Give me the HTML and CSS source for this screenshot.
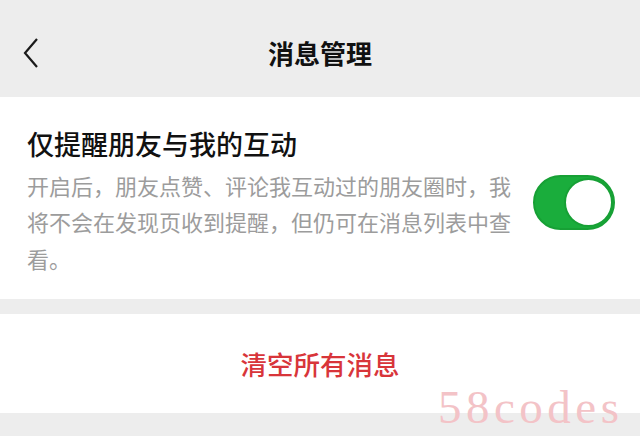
FILE: index.html
```html
<!DOCTYPE html>
<html>
<head>
    <title>消息管理</title>
    <link rel="stylesheet" href="styles.css">
</head>
<body>
    <div class="header">
        <div class="back">
            <svg width="18" height="32" viewBox="0 0 18 32">
                <path d="M15 2 L3 16 L15 30" fill="none" stroke="#1a1a1a" stroke-width="2.2"/>
            </svg>
        </div>
        <div class="title">消息管理</div>
    </div>

    <div class="card setting">
        <div class="text">
            <div class="label">仅提醒朋友与我的互动</div>
            <div class="desc">开启后，朋友点赞、评论我互动过的朋友圈时，我将不会在发现页收到提醒，但仍可在消息列表中查看。</div>
        </div>
        <div class="switch"><div class="knob"></div></div>
    </div>

    <div class="card clear">
        <div class="clear-btn">清空所有消息</div>
        <div class="watermark">58codes</div>
    </div>
</body>
</html>
```

FILE: styles.css
```css
body {
    margin: 0;
    background-color: #ededed;
    font-family: "Noto Sans CJK SC", "Noto Sans", sans-serif;
    width: 640px;
    height: 436px;
    overflow: hidden;
}
.header {
    height: 97px;
    display: flex;
    align-items: center;
    justify-content: center;
    position: relative;
}
.back {
    position: absolute;
    left: 22px;
    top: 37px;
    width: 18px;
    height: 32px;
}
.title {
    font-size: 26px;
    font-weight: 700;
    color: #111;
    margin-top: 8px;
}
.card {
    background-color: #fff;
}
.setting {
    display: flex;
    align-items: center;
    padding: 22px 25px 18px 27px;
    height: 162px;
}
.text {
    width: 494px;
}
.label {
    font-size: 27px;
    font-weight: 500;
    color: #111;
    line-height: 40px;
}
.desc {
    font-size: 22px;
    color: #9c9c9c;
    line-height: 36.5px;
    margin-top: 3px;
}
.switch {
    margin-left: 12px;
    margin-top: 4px;
    width: 82px;
    height: 55px;
    border-radius: 28px;
    background-color: #1aad3c;
    box-sizing: border-box;
    border: 2px solid #17a035;
    display: flex;
    justify-content: flex-end;
    align-items: center;
}
.knob {
    width: 49px;
    height: 49px;
    border-radius: 50%;
    background-color: #fff;
    border: 2px solid #17a035;
    box-sizing: border-box;
    margin-right: 0;
}
.clear {
    margin-top: 15px;
    height: 99px;
    display: flex;
    justify-content: center;
    align-items: center;
    position: relative;
}
.clear-btn {
    font-size: 26.5px;
    font-weight: 500;
    color: #d8353a;
}
.watermark {
    position: absolute;
    left: 438px;
    top: 66px;
    font-family: "Liberation Serif", serif;
    font-size: 47px;
    color: #f3c3c7;
    letter-spacing: 4.5px;
}
```
